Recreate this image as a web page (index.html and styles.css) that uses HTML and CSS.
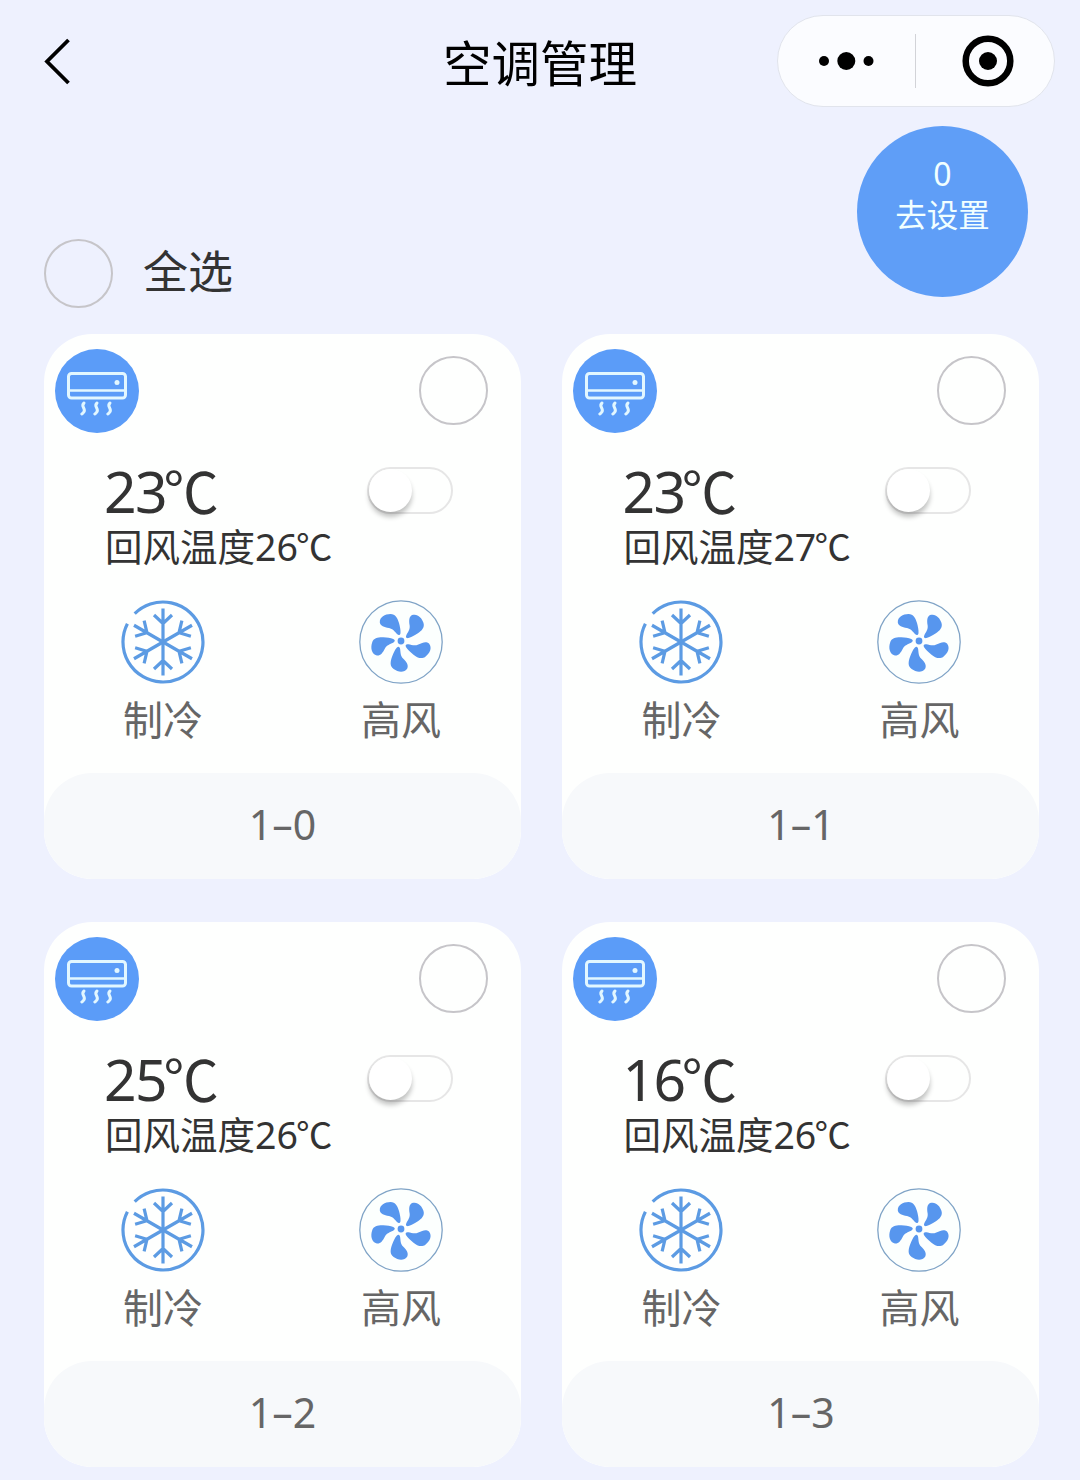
FILE: index.html
```
<!DOCTYPE html>
<html lang="zh-CN">
<head>
  <meta charset="UTF-8" />
  <meta name="viewport" content="width=device-width, initial-scale=1.0"/>
  <title>空调管理</title>
  <link rel="stylesheet" href="styles.css">
</head>
<body>

  <!-- Icons -->
  <svg class="icon-defs" width="0" height="0">
    <symbol id="icon-ac" viewBox="0 0 84 84">
      <circle cx="42" cy="42" r="42" fill="#5b9cf8"/>
      <g fill="none" stroke="#e2f7ff" stroke-width="3" stroke-linecap="round">
        <rect x="13.5" y="24.500" width="57" height="24.500" rx="3"/>
        <path d="M14 41.500H70" stroke-width="2.600"/>
        <path d="M29 54c-4 3.500 2.500 5.500-.2 9-.7 1-1.200 1.500-2 2M42 54c-4 3.500 2.500 5.500-.2 9-.7 1-1.200 1.500-2 2M55 54c-4 3.500 2.500 5.500-.2 9-.7 1-1.200 1.500-2 2"/>
      </g>
      <circle cx="62" cy="33.500" r="2.500" fill="#e2f7ff"/>
    </symbol>
    <symbol id="icon-cool" viewBox="0 0 84 84">
      <g fill="none" stroke="#5c9be3" stroke-width="3.200">
        <path d="M13.700 13.700A40 40 0 1 1 6.400 23.700"/>
        <path id="arm" d="M42 42V8.500M33 15L42 23.500L51 15"/>
        <use href="#arm" transform="rotate(60 42 42)"/>
        <use href="#arm" transform="rotate(120 42 42)"/>
        <use href="#arm" transform="rotate(180 42 42)"/>
        <use href="#arm" transform="rotate(240 42 42)"/>
        <use href="#arm" transform="rotate(300 42 42)"/>
      </g>
    </symbol>
    <symbol id="icon-fan" viewBox="0 0 84 84">
      <circle cx="42" cy="42" r="41.200" fill="#fcfffe" stroke="#7fa3c6" stroke-width="1.300"/>
      <g fill="#5796ee">
        <circle cx="42" cy="41" r="3.400"/>
        <path id="blade" d="M38 34C35.500 31.500 34 28.800 30 28C25 27.200 21.500 26 20.800 22.500C20.500 17 26 14 31.500 14C36.500 14 38.500 18 40 23C41 27 41.800 30 41.500 33C41.200 35.600 39.500 35.500 38 34Z"/>
        <use href="#blade" transform="rotate(72 42 41)"/>
        <use href="#blade" transform="rotate(144 42 41)"/>
        <use href="#blade" transform="rotate(216 42 41)"/>
        <use href="#blade" transform="rotate(288 42 41)"/>
      </g>
    </symbol>
  </svg>

  <!-- Nav bar -->
  <header class="navbar">
    <svg class="back" viewBox="0 0 30 48"><path d="M25.500 3L4 24.500L25.500 46" fill="none" stroke="#000" stroke-width="3.800"/></svg>
    <h1>空调管理</h1>
    <div class="capsule">
      <svg class="dots" viewBox="0 0 56 20"><circle cx="6" cy="10" r="5"/><circle cx="28.300" cy="10" r="9"/><circle cx="50.500" cy="10" r="5"/></svg>
      <span class="divider"></span>
      <svg class="target" viewBox="0 0 52 52"><circle cx="26" cy="26" r="22.300" fill="none" stroke="#000" stroke-width="6.500"/><circle cx="26" cy="26" r="9"/></svg>
    </div>
  </header>

  <!-- Select all -->
  <section class="toolbar">
    <div class="select-all"><span class="radio"></span><span class="select-text">全选</span></div>
    <div class="go-set"><span class="count">0</span><span>去设置</span></div>
  </section>

  <!-- Air conditioners -->
  <main class="card-grid">
    <div class="card">
      <div class="card-top"><svg class="icon"><use href="#icon-ac"/></svg><span class="radio"></span></div>
      <div class="status">
        <div class="temp">23<span class="unit">℃</span></div>
        <span class="switch"></span>
      </div>
      <p class="return-temp">回风温度26<span class="unit">℃</span></p>
      <div class="modes">
        <div class="mode"><svg class="icon"><use href="#icon-cool"/></svg>制冷</div>
        <div class="mode"><svg class="icon"><use href="#icon-fan"/></svg>高风</div>
      </div>
      <div class="card-name">1–0</div>
    </div>

    <div class="card">
      <div class="card-top"><svg class="icon"><use href="#icon-ac"/></svg><span class="radio"></span></div>
      <div class="status">
        <div class="temp">23<span class="unit">℃</span></div>
        <span class="switch"></span>
      </div>
      <p class="return-temp">回风温度27<span class="unit">℃</span></p>
      <div class="modes">
        <div class="mode"><svg class="icon"><use href="#icon-cool"/></svg>制冷</div>
        <div class="mode"><svg class="icon"><use href="#icon-fan"/></svg>高风</div>
      </div>
      <div class="card-name">1–1</div>
    </div>

    <div class="card">
      <div class="card-top"><svg class="icon"><use href="#icon-ac"/></svg><span class="radio"></span></div>
      <div class="status">
        <div class="temp">25<span class="unit">℃</span></div>
        <span class="switch"></span>
      </div>
      <p class="return-temp">回风温度26<span class="unit">℃</span></p>
      <div class="modes">
        <div class="mode"><svg class="icon"><use href="#icon-cool"/></svg>制冷</div>
        <div class="mode"><svg class="icon"><use href="#icon-fan"/></svg>高风</div>
      </div>
      <div class="card-name">1–2</div>
    </div>

    <div class="card">
      <div class="card-top"><svg class="icon"><use href="#icon-ac"/></svg><span class="radio"></span></div>
      <div class="status">
        <div class="temp">16<span class="unit">℃</span></div>
        <span class="switch"></span>
      </div>
      <p class="return-temp">回风温度26<span class="unit">℃</span></p>
      <div class="modes">
        <div class="mode"><svg class="icon"><use href="#icon-cool"/></svg>制冷</div>
        <div class="mode"><svg class="icon"><use href="#icon-fan"/></svg>高风</div>
      </div>
      <div class="card-name">1–3</div>
    </div>
  </main>

</body>
</html>
```
FILE: styles.css
```
* {
  box-sizing: border-box;
}

body {
  margin: 0;
  height: 1480px;
  overflow: hidden;
  background-color: #eef1fe;
  color: #333;
  font-family: "Noto Sans", "Noto Sans CJK SC", sans-serif;
}

.icon-defs {
  display: block;
}

.navbar {
  display: grid;
  grid-template-columns: 400px 1fr 278px;
  align-items: center;
  height: 107px;
  padding: 15px 25px 0 43px;
}

.back {
  width: 30px;
  height: 48px;
}

h1 {
  margin: 0;
  padding-top: 4px;
  font-size: 48.5px;
  font-weight: 400;
  line-height: 88px;
  color: #000;
}

.capsule {
  display: flex;
  align-items: center;
  width: 278px;
  height: 92px;
  padding: 0 38px 0 40px;
  border: 1.5px solid #e1e4ec;
  border-radius: 46px;
  background-color: #fbfcff;
}

.dots {
  width: 56px;
  height: 20px;
}

.divider {
  width: 1px;
  height: 54px;
  margin: 0 46px 0 41px;
  background-color: #d2d3d8;
}

.target {
  flex: none;
  width: 52px;
  height: 52px;
}

.toolbar {
  display: flex;
  justify-content: space-between;
  align-items: flex-start;
  height: 227px;
  padding: 19px 52px 0 44px;
}

.select-all {
  display: flex;
  align-items: center;
  gap: 30px;
  margin-top: 113px;
  font-size: 45px;
}

.select-text {
  line-height: 65px;
  padding-bottom: 4px;
}

.radio {
  flex: none;
  width: 69px;
  height: 69px;
  border: 2px solid #c6c5c9;
  border-radius: 50%;
}

.go-set {
  display: flex;
  flex-direction: column;
  align-items: center;
  width: 171px;
  height: 171px;
  padding-top: 27px;
  border-radius: 50%;
  background-color: #5f9ef7;
  color: #f1ffff;
  font-size: 31.5px;
  line-height: 42px;
}

.count {
  font-size: 32px;
  line-height: 41px;
}

.card-grid {
  display: grid;
  grid-template-columns: 477px 477px;
  gap: 43px 41.4px;
  padding-left: 44px;
}

.card {
  display: flex;
  flex-direction: column;
  height: 545px;
  border-radius: 48px;
  background-color: #fefffe;
  overflow: hidden;
}

.card-top {
  display: flex;
  justify-content: space-between;
  padding: 15px 33px 0 11px;
}

.card-top .radio {
  margin-top: 7px;
}

.icon {
  display: block;
  width: 84px;
  height: 84px;
}

.status {
  display: flex;
  justify-content: space-between;
  align-items: center;
  height: 60px;
  margin-top: 27px;
  padding: 0 68px 0 60px;
}

.temp {
  padding-top: 1px;
  font-size: 57px;
  line-height: 57px;
  letter-spacing: -1.5px;
}

.unit {
  margin-left: -0.05em;
  font-family: "Noto Sans CJK SC", sans-serif;
  font-size: 0.97em;
  line-height: 1;
}

.switch {
  width: 86px;
  height: 47px;
  border: 2px solid #e6e6e6;
  border-radius: 24px;
}

.switch::before {
  content: '';
  display: block;
  width: 43px;
  height: 43px;
  border-radius: 50%;
  background-color: #fff;
  box-shadow: 0 5px 5px rgba(0, 0, 0, 0.24);
}

.return-temp {
  height: 55px;
  margin: 0;
  padding-left: 61px;
  font-size: 37.5px;
  line-height: 54px;
}

.modes {
  display: flex;
  gap: 154px;
  margin-top: 25px;
  padding-left: 77px;
}

.mode {
  display: flex;
  flex-direction: column;
  align-items: center;
  gap: 7px;
  width: 84px;
  font-size: 40px;
  line-height: 58px;
  color: #666;
}

.card-name {
  height: 106px;
  margin-top: auto;
  border-radius: 48px;
  background-color: #f7f9fb;
  color: #666;
  font-size: 41px;
  line-height: 103px;
  text-align: center;
}
```
